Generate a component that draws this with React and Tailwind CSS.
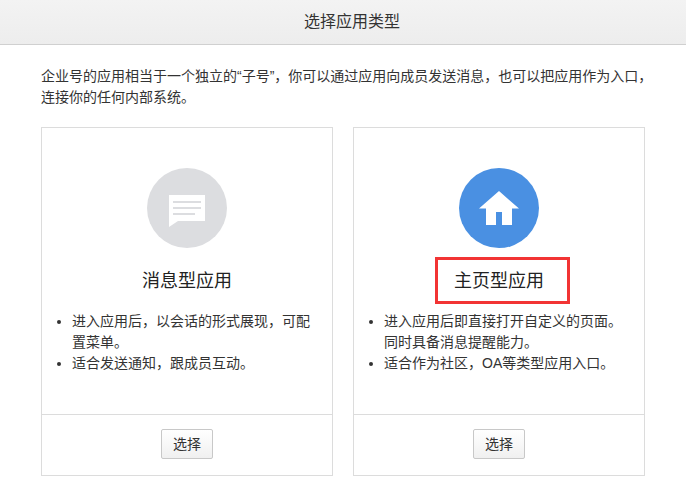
import React from 'react';

const font = { fontFamily: '"Liberation Sans", "Noto Sans CJK SC", sans-serif' };

const ChatIcon = () => (
    <svg className="mt-[6px]" width="36" height="32" viewBox="0 0 36 32" fill="none">
        <path d="M0 0H36V26H9L0 32Z" fill="#fff" />
        <path d="M4 6H32V8H4ZM4 12H32V14H4ZM4 18H26V20H4Z" fill="#dcdde0" />
    </svg>
);

const HomeIcon = () => (
    <svg width="40" height="34" viewBox="0 0 40 34" fill="none">
        <path d="M20 0L40 17.5H33V34H23V21H17V34H7V17.5H0Z" fill="#fff" />
    </svg>
);

const AppCard = ({ icon, circle, title, items, children }) => (
    <div className="relative w-[292px] h-[349px] flex flex-col border border-[#dcdcdc] bg-white">
        <div className="flex-1 flex flex-col items-center pt-10">
            <div className={`w-20 h-20 rounded-full flex items-center justify-center ${circle}`}>{icon}</div>
            <h3 className="mt-5 text-[18px] leading-[26px] font-normal text-[#222]">{title}</h3>
            <ul className="w-full mt-[17px] pl-[30px] pr-[18px] list-disc text-[14px] leading-[21px] text-[#333]">
                {items.map((item) => (
                    <li key={item}>{item}</li>
                ))}
            </ul>
        </div>
        <div className="h-[61px] pb-0.5 border-t border-[#dcdcdc] flex items-center justify-center">
            <button className="w-[52px] h-[30px] rounded-[2px] border border-[#c8c8c8] bg-gradient-to-b from-white to-[#f0f0f0] text-[14px] text-[#333]">
                选择
            </button>
        </div>
        {children}
    </div>
);

export default function App() {
    return (
        <div className="w-[686px] h-[501px] bg-white overflow-hidden" style={font}>
            <div className="h-[45px] pl-[18px] border-b border-[#d0d0d0] bg-gradient-to-b from-[#f3f3f3] to-[#ededed] flex items-center justify-center text-[16px] text-[#333]">
                选择应用类型
            </div>
            <p className="mt-[21px] ml-[41px] mr-[32px] text-[14px] leading-[21px] text-[#333]">
                企业号的应用相当于一个独立的“子号”，你可以通过应用向成员发送消息，也可以把应用作为入口，连接你的任何内部系统。
            </p>
            <div className="mt-[19px] ml-[41px] flex gap-5">
                <AppCard
                    icon={<ChatIcon />}
                    circle="bg-[#dcdde0]"
                    title="消息型应用"
                    items={['进入应用后，以会话的形式展现，可配置菜单。', '适合发送通知，跟成员互动。']}
                />
                <AppCard
                    icon={<HomeIcon />}
                    circle="bg-[#4a90e2]"
                    title="主页型应用"
                    items={['进入应用后即直接打开自定义的页面。同时具备消息提醒能力。', '适合作为社区，OA等类型应用入口。']}
                >
                    <div className="absolute left-[81px] top-[129px] w-[135px] h-[47px] border-[3px] border-[#f23434]" />
                </AppCard>
            </div>
        </div>
    );
}
